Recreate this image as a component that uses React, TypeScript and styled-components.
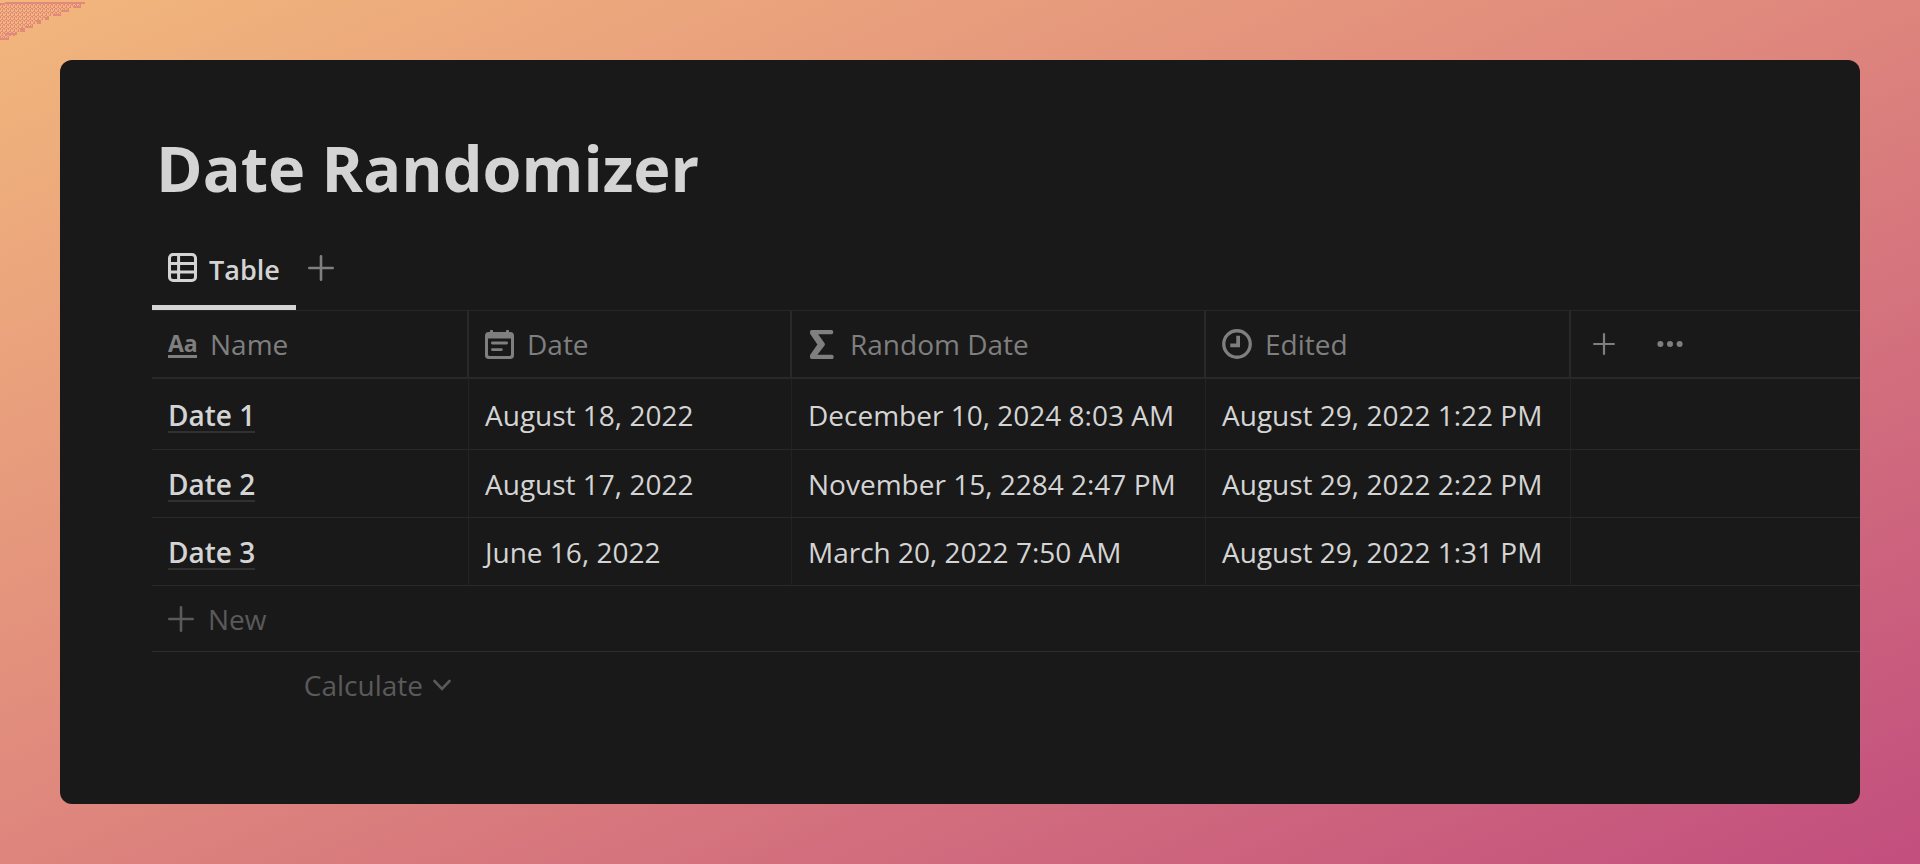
import React from "react";
import styled, { createGlobalStyle } from "styled-components";

const GlobalStyle = createGlobalStyle`
  *, *::before, *::after { box-sizing: border-box; }
  html, body { margin: 0; }
  body {
    min-height: 100vh;
    font-family: "Segoe UI", "Open Sans", "Noto Sans", sans-serif;
    font-size: 28px;
    color: #d4d4d4;
    background: linear-gradient(to bottom right, #f2b77c, #de857d 50%, #c24e7e);
  }
  button { font: inherit; color: inherit; background: none; border: 0; padding: 0; cursor: pointer; }
  svg { display: block; flex: none; }
`;

const Page = styled.main`
  position: relative;
  display: flex;
  min-height: 100vh;
  padding: 60px;
`;

const Speckle = styled.svg`
  position: absolute;
  top: 0;
  left: 0;
`;

const Card = styled.section`
  flex: 1;
  min-width: 0;
  overflow: hidden;
  padding: 62px 0 60px 92px;
  border-radius: 12px;
  background: #191919;
`;

const Title = styled.h1`
  margin: 0;
  padding-left: 4px;
  font-size: 63px;
  line-height: 92px;
  font-weight: 700;
`;

const Tabs = styled.div`
  display: flex;
  align-items: stretch;
  height: 97px;
  padding-top: 16px;
  border-bottom: 1px solid #262626;
`;

const Tab = styled.button`
  display: flex;
  align-items: center;
  gap: 12px;
  padding: 0 16px;
  border-bottom: 5px solid #d4d4d4;
  font-size: 27px;
  font-weight: 600;
`;

const TabLabel = styled.span`
  padding-top: 4px;
`;

const AddView = styled.button`
  padding: 0 12px 5px;
  color: #7f7f7f;
`;

const Grid = styled.table`
  width: 100%;
  table-layout: fixed;
  border-collapse: separate;
  border-spacing: 0;
  line-height: 40px;
`;

const Col = styled.col<{ $width?: number }>`
  width: ${(p) => (p.$width ? `${p.$width}px` : "auto")};
`;

const HeadCell = styled.th`
  height: 68px;
  padding: 0 16px;
  border-bottom: 2px solid #292929;
  border-right: 2px solid #292929;
  color: #7f7f7f;
  font-weight: 400;
  text-align: left;
  white-space: nowrap;
  &:last-child { border-right: 0; }
`;

const HeadLabel = styled.div`
  display: flex;
  align-items: center;
  gap: 13px;
`;

const HeadActions = styled.div`
  display: flex;
  align-items: center;
  gap: 42px;
  padding-left: 6px;
`;

const Body = styled.tbody`
  tr:first-child td { height: 71px; padding-top: 2px; }
`;

const Cell = styled.td`
  height: 68px;
  padding: 0 16px;
  border-bottom: 1px solid #292929;
  border-right: 1px solid #232323;
  white-space: nowrap;
  &:last-child { border-right: 0; }
`;

const PageLink = styled.a`
  display: inline-block;
  color: inherit;
  font-weight: 600;
  line-height: 32px;
  text-decoration: none;
  border-bottom: 2px solid #313131;
`;

const NewCell = styled.td`
  height: 66px;
  padding: 0 16px;
  border-bottom: 1px solid #2d2d2d;
`;

const CalcCell = styled.td`
  height: 66px;
  padding: 0 18px 0 16px;
`;

const MutedButton = styled.button<{ $end?: boolean }>`
  display: flex;
  align-items: center;
  gap: ${(p) => (p.$end ? "10px" : "14px")};
  margin-left: ${(p) => (p.$end ? "auto" : "0")};
  color: #5a5a5a;
`;

const TextGlyph = styled.span`
  width: 29px;
  border-bottom: 3px solid currentColor;
  font-size: 23px;
  font-weight: 700;
  line-height: 24px;
`;

const Plus = ({ size }: { size: number }) => (
  <svg width={size} height={size} viewBox="0 0 26 26" fill="none" stroke="currentColor" strokeWidth="2.6" strokeLinecap="round" aria-hidden="true">
    <path d="M13 1.3v23.4M1.3 13h23.4" />
  </svg>
);

const TableIcon = () => (
  <svg width="29" height="29" viewBox="0 0 29 29" fill="none" stroke="currentColor" strokeWidth="3" aria-hidden="true">
    <rect x="1.5" y="1.5" width="26" height="26" rx="3.6" />
    <path d="M10.6 1.5v26M1.5 10.4h26M1.5 19h26" />
  </svg>
);

const CalendarIcon = () => (
  <svg width="29" height="29" viewBox="0 0 29 29" fill="currentColor" aria-hidden="true">
    <path
      fillRule="evenodd"
      d="M5 .8A.8.8 0 0 1 5.800 0H7.200A.8.8 0 0 1 8 .8V2H21V.8A.8.8 0 0 1 21.800 0H23.200A.8.8 0 0 1 24 .8V2H25.200A3.800 3.800 0 0 1 29 5.800V25.200A3.800 3.800 0 0 1 25.200 29H3.800A3.800 3.800 0 0 1 0 25.200V5.800A3.800 3.800 0 0 1 3.800 2H5zM3 8.600V24.600A1.400 1.400 0 0 0 4.400 26H24.600A1.400 1.400 0 0 0 26 24.600V8.600z"
    />
    <path d="M7.400 13H21.600M7.400 19.600H16.400" stroke="currentColor" strokeWidth="2.800" strokeLinecap="round" />
  </svg>
);

const SigmaIcon = () => (
  <svg width="29" height="29" viewBox="0 0 29 29" fill="currentColor" aria-hidden="true">
    <path d="M3.800 0H23.600A1.600 1.600 0 0 1 25.200 1.600V2.600A1.600 1.600 0 0 1 23.600 4.200H10.200L16.600 13.200Q17.300 14.300 16.600 15.400L9.400 24.800H24A1.600 1.600 0 0 1 25.600 26.400V27.400A1.600 1.600 0 0 1 24 29H3.800A1.800 1.800 0 0 1 2 27.200V25.800Q2 25 2.600 24.200L9.400 14.400L2.600 4.400Q2 3.600 2 2.800V1.800A1.800 1.800 0 0 1 3.800 0Z" />
  </svg>
);

const ClockIcon = () => (
  <svg width="30" height="30" viewBox="0 0 29 29" fill="none" stroke="currentColor" aria-hidden="true">
    <circle cx="14.500" cy="14.500" r="12.800" strokeWidth="3.200" />
    <path d="M15.600 6.600V15.800H8" strokeWidth="3.600" />
  </svg>
);

const DotsIcon = () => (
  <svg width="26" height="8" viewBox="0 0 26 8" fill="currentColor" aria-hidden="true">
    <circle cx="3.400" cy="4" r="3" />
    <circle cx="13" cy="4" r="3" />
    <circle cx="22.600" cy="4" r="3" />
  </svg>
);

const ChevronIcon = () => (
  <svg width="18" height="12" viewBox="0 0 18 12" fill="none" stroke="currentColor" strokeWidth="2.600" strokeLinecap="round" aria-hidden="true">
    <path d="M1.500 2L9 9.800L16.500 2" />
  </svg>
);

const columns = [
  { label: "Name", width: 317, icon: <TextGlyph aria-hidden="true">Aa</TextGlyph> },
  { label: "Date", width: 323, icon: <CalendarIcon /> },
  { label: "Random Date", width: 414, icon: <SigmaIcon /> },
  { label: "Edited", width: 365, icon: <ClockIcon /> },
];

const rows = [
  { name: "Date 1", date: "August 18, 2022", random: "December 10, 2024 8:03 AM", edited: "August 29, 2022 1:22 PM" },
  { name: "Date 2", date: "August 17, 2022", random: "November 15, 2284 2:47 PM", edited: "August 29, 2022 2:22 PM" },
  { name: "Date 3", date: "June 16, 2022", random: "March 20, 2022 7:50 AM", edited: "August 29, 2022 1:31 PM" },
];

export default function App() {
  return (
    <>
      <GlobalStyle />
      <Page>
        <Speckle width="86" height="42" viewBox="0 0 86 42" aria-hidden="true" shapeRendering="crispEdges">
          <defs>
            <pattern id="speckle" width="4" height="4" patternUnits="userSpaceOnUse">
              <path d="M0 0h1v2h-1zM2 1h1v3h-1zM1 3h1v1h-1zM3 0h1v1h-1z" fill="#e2897c" />
            </pattern>
          </defs>
          <path d="M0 3H81V8H69V12H61V16H49V20H41V24H33V28H25V32H17V36H9V40H0Z" fill="url(#speckle)" />
          <path d="M5 2h80v2H5zM0 3h5v2H0zM73 6h8v2h-8zM61 10h8v2h-8zM53 14h8v2h-8zM45 17h4v3h-4zM37 20h4v4h-4zM25 26h8v2h-8zM20 28h5v4h-5zM5 33h12v2H5zM0 38h9v2H0z" fill="#e2897c" />
        </Speckle>
        <Card>
          <Title>Date Randomizer</Title>
          <Tabs>
            <Tab type="button">
              <TableIcon />
              <TabLabel>Table</TabLabel>
            </Tab>
            <AddView type="button" aria-label="Add a view">
              <Plus size={26} />
            </AddView>
          </Tabs>
          <Grid>
            <colgroup>
              {columns.map((c) => (
                <Col key={c.label} $width={c.width} />
              ))}
              <Col />
            </colgroup>
            <thead>
              <tr>
                {columns.map((c) => (
                  <HeadCell key={c.label} scope="col">
                    <HeadLabel>
                      {c.icon}
                      {c.label}
                    </HeadLabel>
                  </HeadCell>
                ))}
                <HeadCell>
                  <HeadActions>
                    <button type="button" aria-label="Add a property">
                      <Plus size={22} />
                    </button>
                    <button type="button" aria-label="More options">
                      <DotsIcon />
                    </button>
                  </HeadActions>
                </HeadCell>
              </tr>
            </thead>
            <Body>
              {rows.map((r) => (
                <tr key={r.name}>
                  <Cell>
                    <PageLink href="#">{r.name}</PageLink>
                  </Cell>
                  <Cell>{r.date}</Cell>
                  <Cell>{r.random}</Cell>
                  <Cell>{r.edited}</Cell>
                  <Cell />
                </tr>
              ))}
            </Body>
            <tfoot>
              <tr>
                <NewCell colSpan={5}>
                  <MutedButton type="button">
                    <Plus size={26} />
                    New
                  </MutedButton>
                </NewCell>
              </tr>
              <tr>
                <CalcCell>
                  <MutedButton type="button" $end>
                    Calculate
                    <ChevronIcon />
                  </MutedButton>
                </CalcCell>
              </tr>
            </tfoot>
          </Grid>
        </Card>
      </Page>
    </>
  );
}
